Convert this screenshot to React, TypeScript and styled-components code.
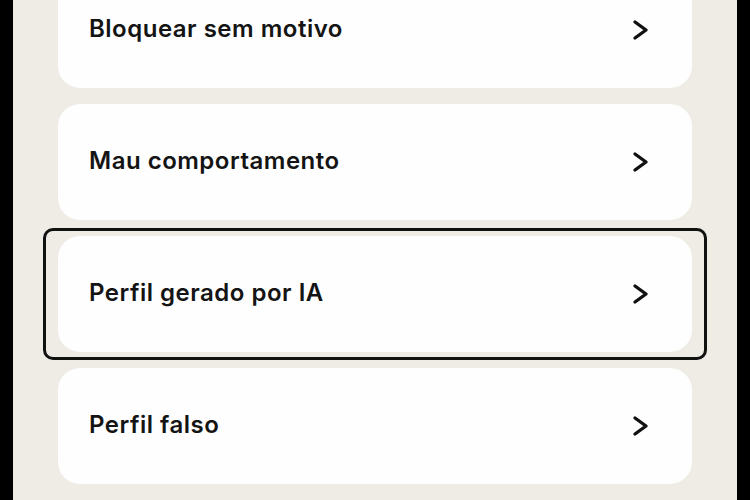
import React from "react";
import styled, { createGlobalStyle } from "styled-components";

const GlobalStyle = createGlobalStyle`
  html, body {
    margin: 0;
    padding: 0;
    background: #000;
  }
  #root {
    height: 500px;
  }
`;

const Screen = styled.div`
  height: 500px;
  margin: 0 13px;
  background: #efece5;
  overflow: hidden;
`;

const List = styled.ul`
  list-style: none;
  margin: -28px 0 0;
  padding: 0 45px;
  display: flex;
  flex-direction: column;
  gap: 16px;
`;

const Item = styled.li<{ focused?: boolean }>`
  position: relative;
  height: 116px;
  border-radius: 22px;
  background: #fefefe;
  display: flex;
  align-items: center;
  justify-content: space-between;
  padding: 0 41px 0 31px;
  box-sizing: border-box;
  cursor: pointer;

  &::after {
    content: "";
    display: ${({ focused }) => (focused ? "block" : "none")};
    position: absolute;
    top: -8px;
    bottom: -8px;
    left: -15px;
    right: -15px;
    border: 3px solid #111;
    border-radius: 10px;
  }
`;

const Label = styled.span`
  font-family: Inter, "Noto Sans", sans-serif;
  font-size: 24px;
  font-weight: 600;
  letter-spacing: 0.5px;
  color: #141414;
  margin-top: -3px;
`;

const Chevron = () => (
  <svg width="20" height="24" viewBox="0 0 20 24" fill="none">
    <polyline
      points="4,4 15,12 4,20"
      stroke="#111"
      strokeWidth="3.4"
      strokeLinecap="round"
      strokeLinejoin="round"
    />
  </svg>
);

const reasons = [
  "Bloquear sem motivo",
  "Mau comportamento",
  "Perfil gerado por IA",
  "Perfil falso",
];

const App: React.FC = () => {
  return (
    <>
      <GlobalStyle />
      <Screen>
        <List>
          {reasons.map((r, i) => (
            <Item key={r} focused={i === 2}>
              <Label>{r}</Label>
              <Chevron />
            </Item>
          ))}
        </List>
      </Screen>
    </>
  );
};

export default App;
